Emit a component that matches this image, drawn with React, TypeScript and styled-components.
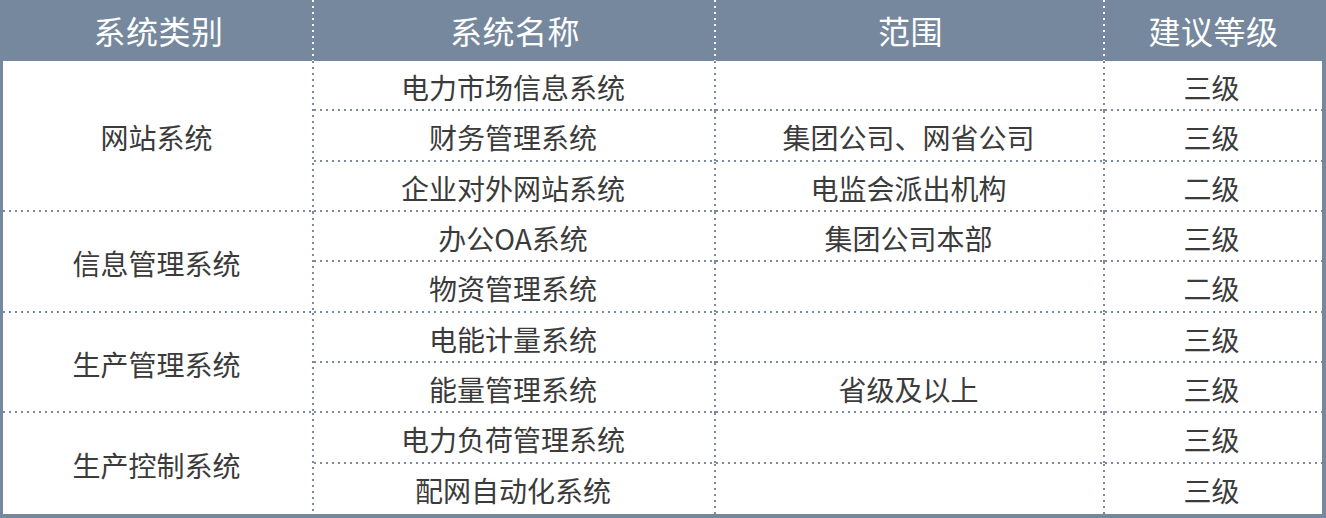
import React from "react";
import styled, { createGlobalStyle, css } from "styled-components";

const FRAME = "#76889d";
const DOT = "#7a8b9f";

const GlobalStyle = createGlobalStyle`
  html, body {
    margin: 0;
    padding: 0;
    background: #ffffff;
  }
  body {
    font-family: "Noto Sans CJK SC", "Noto Sans", sans-serif;
  }
`;

const Table = styled.div`
  box-sizing: border-box;
  width: 1326px;
  height: 518px;
  display: grid;
  grid-template-columns: 311px 402px 389px 1fr;
  grid-template-rows: 61px repeat(9, 1fr);
  border-left: 3px solid ${FRAME};
  border-right: 4px solid ${FRAME};
  border-bottom: 4px solid ${FRAME};
  background: #ffffff;
`;

const dotsRight = (color: string) =>
  `linear-gradient(to bottom, ${color} 2px, transparent 2px) top right / 2px 6px repeat-y`;
const dotsBottom = (color: string) =>
  `linear-gradient(to right, ${color} 2px, transparent 2px) bottom left / 6px 2px repeat-x`;

const HeadCell = styled.div<{ $divider?: boolean }>`
  display: flex;
  align-items: center;
  justify-content: center;
  background: ${FRAME};
  color: #ffffff;
  font-size: 32px;
  font-weight: 400;
  letter-spacing: 0.5px;
  padding-bottom: 2px;
  ${({ $divider }) =>
    $divider &&
    css`
      background: ${dotsRight("#f4f6f8")}, ${FRAME};
    `}
`;

const Cell = styled.div<{ $right?: boolean; $bottom?: boolean; $span?: number }>`
  display: flex;
  align-items: center;
  justify-content: center;
  color: #3b3b3b;
  font-size: 28px;
  padding-top: 2px;
  padding-right: 4px;
  ${({ $span }) => $span && css`grid-row: span ${$span};`}
  background: ${({ $right, $bottom }) =>
    [$right ? dotsRight(DOT) : null, $bottom ? dotsBottom(DOT) : null]
      .filter(Boolean)
      .join(", ") || "none"};
`;

type Row = { name: string; scope: string; level: string };
type Group = { category: string; rows: Row[] };

const groups: Group[] = [
  {
    category: "网站系统",
    rows: [
      { name: "电力市场信息系统", scope: "", level: "三级" },
      { name: "财务管理系统", scope: "集团公司、网省公司", level: "三级" },
      { name: "企业对外网站系统", scope: "电监会派出机构", level: "二级" },
    ],
  },
  {
    category: "信息管理系统",
    rows: [
      { name: "办公OA系统", scope: "集团公司本部", level: "三级" },
      { name: "物资管理系统", scope: "", level: "二级" },
    ],
  },
  {
    category: "生产管理系统",
    rows: [
      { name: "电能计量系统", scope: "", level: "三级" },
      { name: "能量管理系统", scope: "省级及以上", level: "三级" },
    ],
  },
  {
    category: "生产控制系统",
    rows: [
      { name: "电力负荷管理系统", scope: "", level: "三级" },
      { name: "配网自动化系统", scope: "", level: "三级" },
    ],
  },
];

const headers = ["系统类别", "系统名称", "范围", "建议等级"];

export default function App() {
  const total = groups.reduce((n, g) => n + g.rows.length, 0);
  let index = 0;

  return (
    <>
      <GlobalStyle />
      <Table>
        {headers.map((h, i) => (
          <HeadCell key={h} $divider={i < headers.length - 1}>
            {h}
          </HeadCell>
        ))}
        {groups.map((g, gi) => {
          const lastGroup = gi === groups.length - 1;
          return (
            <React.Fragment key={g.category}>
              <Cell $span={g.rows.length} $right $bottom={!lastGroup}>
                {g.category}
              </Cell>
              {g.rows.map((r) => {
                index += 1;
                const notLast = index < total;
                return (
                  <React.Fragment key={r.name}>
                    <Cell $right $bottom={notLast}>{r.name}</Cell>
                    <Cell $right $bottom={notLast}>{r.scope}</Cell>
                    <Cell $bottom={notLast}>{r.level}</Cell>
                  </React.Fragment>
                );
              })}
            </React.Fragment>
          );
        })}
      </Table>
    </>
  );
}
